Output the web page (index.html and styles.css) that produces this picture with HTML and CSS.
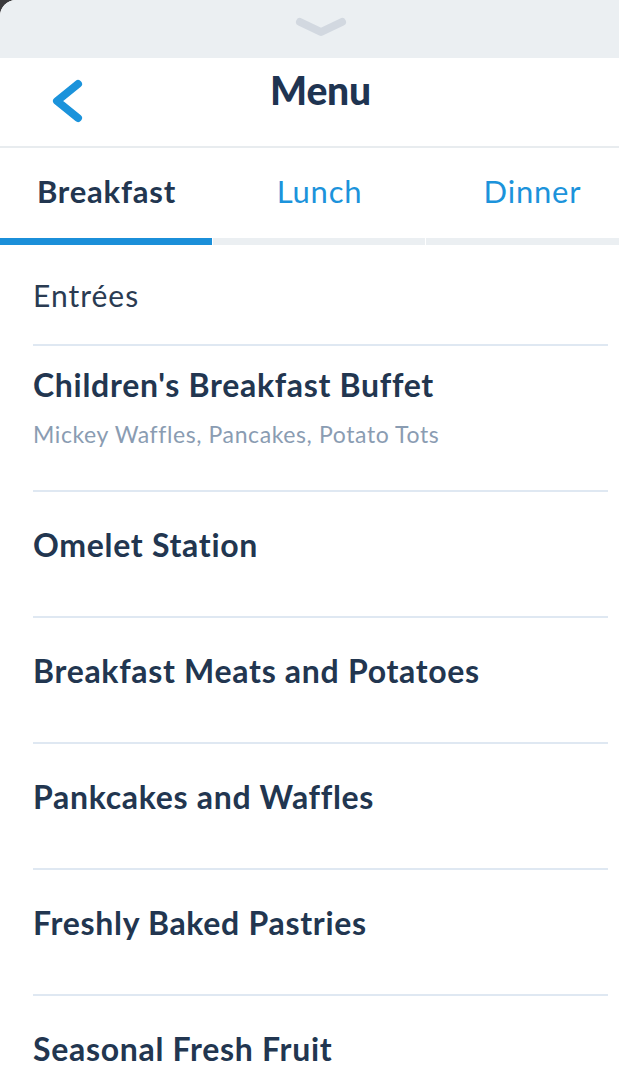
FILE: index.html
```html
<!DOCTYPE html>
<html lang="en">
<head>
<meta charset="utf-8">
<title>Menu</title>
<link rel="stylesheet" href="styles.css">
</head>
<body>
<div class="sheet">
  <div class="grabber">
    <svg class="grab-icon" width="52" height="26" viewBox="0 0 52 26">
      <path d="M5 6 L26 16 L47 6" fill="none" stroke="#d2d8e0" stroke-width="8" stroke-linecap="round" stroke-linejoin="round"/>
    </svg>
  </div>
  <header class="navbar">
    <div class="nav-left">
      <svg class="back-icon" width="40" height="50" viewBox="0 0 40 50">
        <path d="M28 8 L7 25 L28 42" fill="none" stroke="#1b93db" stroke-width="8" stroke-linecap="round" stroke-linejoin="round"/>
      </svg>
    </div>
    <h1 class="title">Menu</h1>
    <div class="nav-right"></div>
  </header>
  <nav class="tabs">
    <div class="tab active"><span class="tab-label">Breakfast</span><span class="tab-bar"></span></div>
    <div class="tab"><span class="tab-label">Lunch</span><span class="tab-bar"></span></div>
    <div class="tab"><span class="tab-label">Dinner</span><span class="tab-bar"></span></div>
  </nav>
  <main class="list">
    <div class="section-head">Entrées</div>
    <div class="item item-desc">
      <div class="item-title">Children's Breakfast Buffet</div>
      <div class="item-sub">Mickey Waffles, Pancakes, Potato Tots</div>
    </div>
    <div class="item"><div class="item-title">Omelet Station</div></div>
    <div class="item"><div class="item-title">Breakfast Meats and Potatoes</div></div>
    <div class="item"><div class="item-title">Pankcakes and Waffles</div></div>
    <div class="item"><div class="item-title">Freshly Baked Pastries</div></div>
    <div class="item"><div class="item-title">Seasonal Fresh Fruit</div></div>
  </main>
</div>
</body>
</html>
```

FILE: styles.css
```css
* { box-sizing: border-box; }
html, body { margin: 0; padding: 0; }
body {
  background: #3a3a3c;
  font-family: Lato, "Noto Sans", sans-serif;
  color: #223650;
  width: 619px;
  height: 1090px;
  overflow: hidden;
}
.sheet {
  background: #ffffff;
  border-top-left-radius: 16px;
  overflow: hidden;
  height: 1090px;
}
.grabber {
  height: 58px;
  background: #ebeff2;
  display: flex;
  justify-content: center;
  align-items: flex-start;
  padding-top: 16px;
  padding-left: 22px;
}
.navbar {
  height: 90px;
  border-bottom: 2px solid #e8ecef;
  display: grid;
  grid-template-columns: 1fr auto 1fr;
  align-items: start;
  padding-left: 22px;
}
.nav-left { padding-top: 18px; margin-left: 28px; }
.back-icon { display: block; }
.title {
  margin: 0;
  padding-top: 12px;
  font-size: 39px;
  line-height: 40px;
  font-weight: 900;
  color: #1f3451;
  letter-spacing: -0.2px;
}
.tabs {
  display: flex;
  overflow: hidden;
  width: 619px;
}
.tab {
  flex: 0 0 213px;
  display: flex;
  flex-direction: column;
}
.tab-label {
  height: 90px;
  display: flex;
  align-items: center;
  justify-content: center;
  font-size: 31px;
  letter-spacing: 0.8px;
  color: #1c93db;
  padding-bottom: 4px;
}
.tab.active .tab-label {
  color: #223650;
  font-weight: 700;
}
.tab-bar {
  height: 7px;
  background: #ebeff2;
  margin-right: 1px;
}
.tab.active .tab-bar { background: #1b8fd9; }
.list {
  padding: 0 11px 0 33px;
}
.section-head {
  height: 101px;
  padding-top: 32px;
  font-size: 30px;
  line-height: 36px;
  letter-spacing: 1px;
  border-bottom: 2px solid #dfe8f2;
  color: #2a3b52;
}
.item {
  height: 126px;
  padding-top: 35px;
  border-bottom: 2px solid #dfe8f2;
}
.item-desc {
  height: 146px;
  padding-top: 21px;
}
.item-title {
  font-size: 32px;
  line-height: 36px;
  font-weight: 700;
  letter-spacing: 0.7px;
  color: #223650;
}
.item-sub {
  margin-top: 16px;
  font-size: 23px;
  line-height: 30px;
  letter-spacing: 0.6px;
  color: #8a9cb2;
}
```
